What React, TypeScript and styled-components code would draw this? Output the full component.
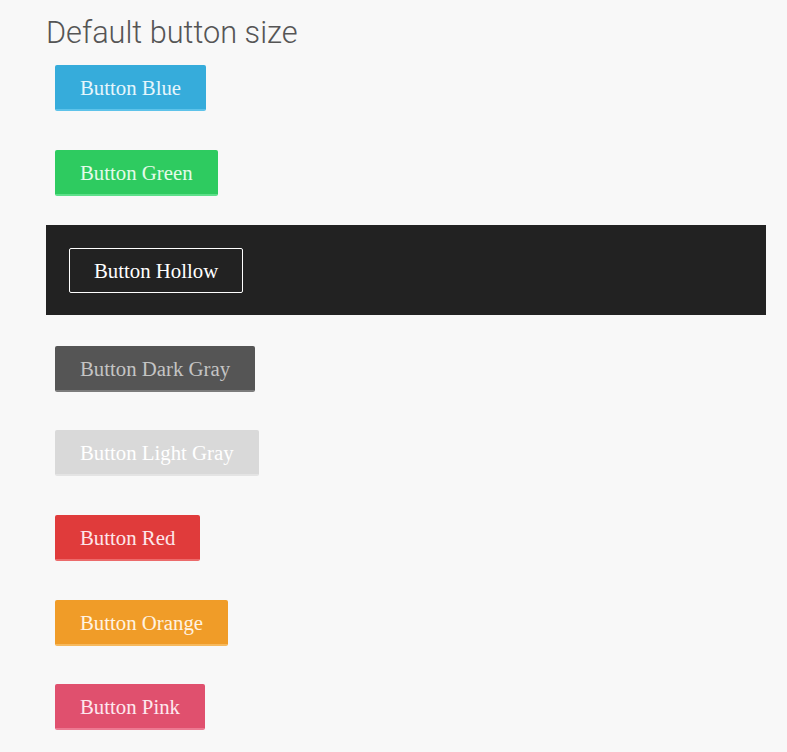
import React from 'react';
import styled, { createGlobalStyle, css } from 'styled-components';

// ============= 樣式定義 =============

const GlobalStyle = createGlobalStyle`
  html, body {
    margin: 0;
    padding: 0;
    background: #f8f8f8;
  }
`;

const Page = styled.div`
  min-height: 752px;
  padding: 14px 21px 0 46px;
  box-sizing: border-box;
`;

const Heading = styled.h1`
  margin: 0 0 13px 0;
  font-family: Roboto, 'Liberation Sans', sans-serif;
  font-weight: 300;
  font-size: 30.7px;
  line-height: 38px;
  color: #555;
`;

const Row = styled.div<{ $gap: number }>`
  display: flex;
  padding-left: 9px;
  margin-bottom: ${p => p.$gap}px;
`;

const DarkPanel = styled.div`
  display: flex;
  background: #222;
  padding: 23px 23px 22px;
  margin-bottom: 31px;
`;

type Tone = 'blue' | 'green' | 'darkGray' | 'lightGray' | 'red' | 'orange' | 'pink';

const tones: Record<Tone, { bg: string; edge: string; text: string }> = {
  blue: { bg: '#36acdb', edge: '#5ec3ea', text: '#e6f6fc' },
  green: { bg: '#2ecb60', edge: '#5ee08a', text: '#e4fbea' },
  darkGray: { bg: '#555555', edge: '#7c7c7c', text: '#c4c4c4' },
  lightGray: { bg: '#d9d9d9', edge: '#e4e4e4', text: '#ffffff' },
  red: { bg: '#e03b3b', edge: '#ec6b6b', text: '#fde6ea' },
  orange: { bg: '#f09c28', edge: '#f6b95d', text: '#fff3e2' },
  pink: { bg: '#e0506e', edge: '#ec7a92', text: '#fde8ee' },
};

const buttonBase = css`
  font-family: 'Liberation Serif', 'DejaVu Serif', serif;
  font-size: 20.8px;
  line-height: 20px;
  padding: 0 25px;
  cursor: pointer;
  border-radius: 2px;
  box-sizing: border-box;
`;

const Button = styled.button<{ $tone: Tone }>`
  ${buttonBase};
  height: 46px;
  border: none;
  border-bottom: 2px solid ${p => tones[p.$tone].edge};
  background: ${p => tones[p.$tone].bg};
  color: ${p => tones[p.$tone].text};
  padding-top: 2px;
`;

const HollowButton = styled.button`
  ${buttonBase};
  height: 45px;
  padding: 0 24px;
  background: transparent;
  border: 1px solid #fff;
  color: #fff;
`;

// ============= 組件實現 =============

const App: React.FC = () => (
  <>
    <GlobalStyle />
    <Page>
      <Heading>Default button size</Heading>
      <Row $gap={39}><Button $tone="blue">Button Blue</Button></Row>
      <Row $gap={29}><Button $tone="green">Button Green</Button></Row>
      <DarkPanel>
        <HollowButton>Button Hollow</HollowButton>
      </DarkPanel>
      <Row $gap={38}><Button $tone="darkGray">Button Dark Gray</Button></Row>
      <Row $gap={39}><Button $tone="lightGray">Button Light Gray</Button></Row>
      <Row $gap={39}><Button $tone="red">Button Red</Button></Row>
      <Row $gap={38}><Button $tone="orange">Button Orange</Button></Row>
      <Row $gap={0}><Button $tone="pink">Button Pink</Button></Row>
    </Page>
  </>
);

export default App;
